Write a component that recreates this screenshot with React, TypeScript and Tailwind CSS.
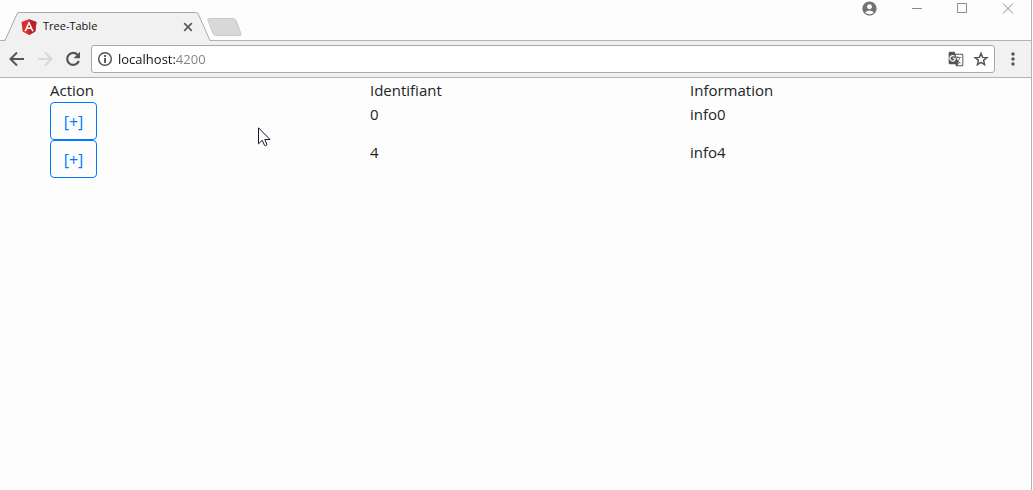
import { useState } from "react";
import {
  MdAccountCircle,
  MdGTranslate,
  MdMoreVert,
} from "react-icons/md";

type Row = { id: number; info: string };

const rows: Row[] = [
  { id: 0, info: "info0" },
  { id: 4, info: "info4" },
];

function AngularLogo() {
  return (
    <svg className="h-4 w-4 shrink-0" viewBox="0 0 250 250" aria-hidden="true">
      <path fill="#dd2c31" d="M125 4 8 45l18 152 99 52 99-52 18-152z" />
      <path fill="#b9222d" d="M125 4v245l99-52 18-152z" />
      <path
        fill="#fff"
        d="M125 30 52 192h27l15-37h62l15 37h27zm21 103h-42l21-51z"
      />
    </svg>
  );
}

function Arrow({ forward = false }: { forward?: boolean }) {
  return (
    <svg width="20" height="20" viewBox="0 0 20 20" fill="none" stroke="currentColor" strokeWidth="2" aria-hidden="true">
      <path d={forward ? "M3 10h13M10 3.500 16.500 10 10 16.500" : "M17 10H4M10 3.500 3.500 10l6.500 6.500"} />
    </svg>
  );
}

function ReloadIcon() {
  return (
    <svg width="20" height="20" viewBox="0 0 20 20" aria-hidden="true">
      <path d="M14.700 6A6 6 0 1 0 15.800 12" fill="none" stroke="currentColor" strokeWidth="2.200" />
      <path d="M17 2.800V9.200H10.600z" fill="currentColor" />
    </svg>
  );
}

function InfoIcon() {
  return (
    <svg width="16" height="16" viewBox="0 0 16 16" aria-hidden="true">
      <circle cx="8" cy="8" r="6.300" fill="none" stroke="currentColor" strokeWidth="1.500" />
      <path d="M7.100 7h1.900v5H7.100zM7.100 4h1.900v1.900H7.100z" fill="currentColor" />
    </svg>
  );
}

function StarIcon() {
  return (
    <svg width="18" height="18" viewBox="0 0 18 18" aria-hidden="true">
      <path
        d="m9 3.400 1.600 4 4.300.3-3.300 2.700 1 4.200L9 12.300l-3.600 2.300 1-4.200L3.100 7.700l4.300-.3z"
        fill="none"
        stroke="currentColor"
        strokeWidth="1.500"
      />
    </svg>
  );
}

function Tab() {
  return (
    <div className="relative -mb-px ml-1 flex h-[29px] w-[207px] items-center pr-4 pl-[17px]">
      <svg
        className="absolute inset-0 h-full w-full"
        viewBox="0 0 207 29"
        preserveAspectRatio="none"
        aria-hidden="true"
      >
        <path
          d="M0 28.500 13 2Q13.700 .5 15 .5H192Q193.500 .5 194.200 2L206 28.500V29H0z"
          fill="#f1f1f1"
        />
        <path
          d="M0 28.500H1L13 2Q13.700 .5 15 .5H192Q193.500 .5 194.200 2L206 28.500H207"
          fill="none"
          stroke="#a9a9a9"
        />
      </svg>
      <div className="relative flex flex-1 items-center gap-[6px]">
        <AngularLogo />
        <span className="flex-1 text-[11px] text-[#111]">Tree-Table</span>
        <button type="button" aria-label="Close tab" className="text-[#5a5a5a]">
          <svg width="14" height="14" viewBox="0 0 14 14" aria-hidden="true">
            <path d="m3.200 3.200 7.600 7.600m0-7.600-7.600 7.600" fill="none" stroke="currentColor" strokeWidth="1.700" />
          </svg>
        </button>
      </div>
    </div>
  );
}

function TabStrip() {
  return (
    <div className="flex h-[41px] items-end justify-between border-b border-[#b3b3b3]">
      <div className="flex items-end">
        <Tab />
        <button type="button" aria-label="New tab" className="-ml-1 mb-1">
          <svg width="35" height="18" viewBox="0 0 35 18" aria-hidden="true">
            <path
              d="M2 .5H26Q28 .5 29 2.500L34 15.500Q34.500 17.500 33 17.500H9Q7 17.500 6 15.500L.8 2Q.5 .5 2 .5Z"
              fill="#d8d8d8"
              stroke="#c9c9c9"
            />
          </svg>
        </button>
      </div>
      <div className="flex h-4 items-center self-start pr-[17px] text-[#8a8a8a]">
        <button type="button" aria-label="Profile" className="mr-[34px] text-[#727272]">
          <MdAccountCircle size={17} />
        </button>
        <button type="button" aria-label="Minimize" className="mr-[34px]">
          <svg width="11" height="11" viewBox="0 0 11 11" aria-hidden="true">
            <path d="M0 5.500h10" stroke="currentColor" />
          </svg>
        </button>
        <button type="button" aria-label="Maximize" className="mr-[34px]">
          <svg width="11" height="11" viewBox="0 0 11 11" aria-hidden="true">
            <path d="M.5 .5h9v9h-9z" fill="none" stroke="currentColor" />
          </svg>
        </button>
        <button type="button" aria-label="Close window">
          <svg width="12" height="11" viewBox="0 0 12 11" aria-hidden="true">
            <path d="m1 .5 10 10m0-10-10 10" fill="none" stroke="currentColor" />
          </svg>
        </button>
      </div>
    </div>
  );
}

function Toolbar() {
  return (
    <div className="flex h-[37px] items-center border-b border-[#b3b3b3] bg-[#f1f1f1] pr-2 pl-[7px] text-[#555]">
      <div className="flex items-center gap-2">
        <button type="button" aria-label="Back">
          <Arrow />
        </button>
        <button type="button" aria-label="Forward" className="text-[#d8d8d8]">
          <Arrow forward />
        </button>
        <button type="button" aria-label="Reload">
          <ReloadIcon />
        </button>
      </div>
      <div className="ml-2 flex h-7 flex-1 items-center rounded-[3px] border border-[#a9a9a9] bg-white pr-1 pl-[5px]">
        <button type="button" aria-label="Site information">
          <InfoIcon />
        </button>
        <input
          type="text"
          aria-label="Address"
          defaultValue="localhost:4200"
          className="ml-[5px] h-6 min-w-0 flex-1 bg-linear-to-r from-[#111] from-[57px] to-[#808080] to-[57px] bg-clip-text text-[13px] text-transparent caret-black outline-none"
        />
        <button type="button" aria-label="Translate this page" className="mr-2">
          <MdGTranslate size={16} />
        </button>
        <button type="button" aria-label="Bookmark this page">
          <StarIcon />
        </button>
      </div>
      <button type="button" aria-label="Menu" className="ml-2">
        <MdMoreVert size={20} />
      </button>
    </div>
  );
}

function TreeTable() {
  const [open, setOpen] = useState<number[]>([]);
  const toggle = (id: number) =>
    setOpen((ids) => (ids.includes(id) ? ids.filter((i) => i !== id) : [...ids, id]));

  return (
    <table className="w-full table-fixed border-collapse text-left text-[15px]/6 text-[#212529]">
      <thead>
        <tr>
          <th className="p-0 font-normal">Action</th>
          <th className="p-0 font-normal">Identifiant</th>
          <th className="p-0 font-normal">Information</th>
        </tr>
      </thead>
      <tbody>
        {rows.map((row) => (
          <tr key={row.id} className="align-top">
            <td className="p-0">
              <button
                type="button"
                aria-expanded={open.includes(row.id)}
                onClick={() => toggle(row.id)}
                className="block h-[38px] w-[47px] rounded-sm border border-[#007bff] pt-0.5 text-base text-[#007bff]"
              >
                [+]
              </button>
            </td>
            <td className="p-0">{row.id}</td>
            <td className="p-0">{row.info}</td>
          </tr>
        ))}
      </tbody>
    </table>
  );
}

function Pointer() {
  return (
    <svg
      className="pointer-events-none absolute top-[127px] left-[258px]"
      width="13"
      height="20"
      viewBox="0 0 13 20"
      aria-hidden="true"
    >
      <path
        d="M.5 .8v16l3.700-3.500 2.300 5q1 .8 2.500-.6L6.800 12.500h5.200z"
        fill="#fff"
        stroke="#1a1a26"
      />
    </svg>
  );
}

export default function App() {
  return (
    <div className="relative min-h-screen bg-[#fdfdfd] pr-px font-['Open_Sans','Noto_Sans',sans-serif]">
      <div className="min-h-screen border-r border-[#b3b3b3]">
        <TabStrip />
        <Toolbar />
        <main className="pr-[21px] pl-[50px]">
          <TreeTable />
        </main>
      </div>
      <Pointer />
    </div>
  );
}
